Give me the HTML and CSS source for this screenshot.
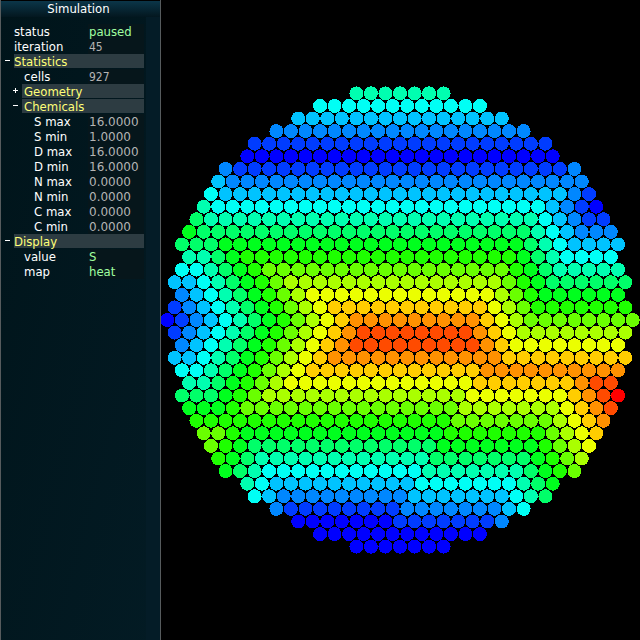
FILE: index.html
```
<!DOCTYPE html>
<html lang="en">
<head>
<meta charset="utf-8">
<title>Simulation</title>
<link rel="stylesheet" href="styles.css">
</head>
<body>
<div class="app">
  <aside class="panel">
    <h1 class="title">Simulation</h1>
    <div class="content">
      <dl class="rows">
        <div class="row"><dt>status</dt><dd class="option">paused</dd></div>
        <div class="row"><dt>iteration</dt><dd>45</dd></div>
      </dl>
      <button class="group" type="button" aria-expanded="true"><span class="sign minus"></span><span class="name">Statistics</span></button>
      <dl class="rows level1">
        <div class="row"><dt>cells</dt><dd>927</dd></div>
      </dl>
      <button class="group level1" type="button" aria-expanded="false"><span class="sign plus"></span><span class="name">Geometry</span></button>
      <button class="group level1" type="button" aria-expanded="true"><span class="sign minus"></span><span class="name">Chemicals</span></button>
      <dl class="rows level2">
        <div class="row"><dt>S max</dt><dd class="decimal">16.0000</dd></div>
        <div class="row"><dt>S min</dt><dd class="decimal">1.0000</dd></div>
        <div class="row"><dt>D max</dt><dd class="decimal">16.0000</dd></div>
        <div class="row"><dt>D min</dt><dd class="decimal">16.0000</dd></div>
        <div class="row"><dt>N max</dt><dd class="decimal">0.0000</dd></div>
        <div class="row"><dt>N min</dt><dd class="decimal">0.0000</dd></div>
        <div class="row"><dt>C max</dt><dd class="decimal">0.0000</dd></div>
        <div class="row"><dt>C min</dt><dd class="decimal">0.0000</dd></div>
      </dl>
      <button class="group" type="button" aria-expanded="true"><span class="sign minus"></span><span class="name">Display</span></button>
      <dl class="rows level1">
        <div class="row"><dt>value</dt><dd class="option">S</dd></div>
        <div class="row"><dt>map</dt><dd class="option">heat</dd></div>
      </dl>
    </div>
  </aside>
  <main class="stage">
    <svg id="cells" class="cells" viewBox="-240 -320 480 640" role="img" aria-label="Cell heat map"></svg>
  </main>
</div>
<script src="cells.js"></script>
</body>
</html>
```
FILE: styles.css
```
* {
  box-sizing: border-box;
}

body {
  margin: 0;
  background: #000;
  font: 13px/15px "DejaVu Sans Condensed", "DejaVu Sans", sans-serif;
  color: #fff;
}

.app {
  display: flex;
  min-height: 100vh;
}

.panel {
  flex: none;
  width: 161px;
  margin-right: -1px;
  z-index: 1;
  border: solid #565b5d;
  border-width: 0 1px;
  background: linear-gradient(105deg, #00141a, #031b24);
}

.title {
  margin: 0;
  height: 17px;
  font-size: 13px;
  font-weight: normal;
  line-height: 15px;
  text-align: center;
  padding-right: 4px;
  border-top: 1px solid #000;
  background: linear-gradient(#0b3649, #03171f);
}

.content {
  display: flex;
  flex-direction: column;
  min-height: calc(100vh - 17px);
  margin-right: 14px;
  padding: 7px 2px 0 0;
  box-shadow: 14px 0 #041c27;
}

.rows {
  margin: 0;
  padding-left: 13px;
}

.rows.level1 {
  padding-left: 23px;
}

.rows.level2 {
  padding-left: 33px;
}

.row {
  display: flex;
  justify-content: space-between;
  height: 15px;
}

dd {
  width: 56px;
  margin: 0;
  padding-left: 1px;
  background: #06161b;
  color: #b4b4b4;
  font-size: 12px;
  line-height: 16px;
}

.decimal {
  font-family: "DejaVu Sans", sans-serif;
}

dd.option {
  color: #a0ffa0;
  font-size: 13px;
  line-height: 15px;
}

.group {
  display: flex;
  height: 15px;
  margin: 0;
  padding: 0 0 1px 3px;
  border: 0;
  background: none;
  color: #ffff78;
  font: inherit;
  text-align: left;
}

.group.level1 {
  padding-left: 11px;
}

.sign {
  flex: none;
  width: 10px;
  height: 14px;
  background: linear-gradient(#fff, #fff) 1px 6px / 5px 1px no-repeat;
}

.plus {
  background:
    linear-gradient(#fff, #fff) 1px 6px / 5px 1px no-repeat,
    linear-gradient(#fff, #fff) 3px 4px / 1px 5px no-repeat;
}

.name {
  flex: 1;
  height: 14px;
  background: #2d3c42;
}

.level1 .name {
  padding-left: 2px;
}

.stage {
  flex: 1;
  min-width: 0;
  display: flex;
}

.cells {
  width: 100%;
  height: 100vh;
  shape-rendering: crispEdges;
}
```
FILE: cells.js
```
// Heat palette, coldest (a) to hottest (p).
const palette = {
  a: "#0000ff", b: "#003cff", c: "#0087ff", d: "#00c3ff",
  e: "#00fff5", f: "#00ffb0", g: "#00ff69", h: "#00ff1e",
  i: "#1eff00", j: "#69ff00", k: "#aaff00", l: "#ebff00",
  m: "#ffcd00", n: "#ff9100", o: "#ff4b00", p: "#ff0000"
};

// One entry per lattice row: a level, then how many cells in a row share it.
const rows = [
  "f7", "e12", "d15", "c18", "b21", "a22", "c b23 c", "d c25",
  "e d24 c b", "f e23 d c b a", "g f23 e d c b2", "h g23 f e d c3",
  "g3 h21 g f e d4", "f2 g h i19 h g f e4", "e2 f g h i j17 i h g f5",
  "d2 e f g h i j k15 j i h g6", "c d e f g h i j k l13 k j i h6",
  "b c d e f g h i j k l m11 l k j i7",
  "a b c d e f g h i j k l m n9 m l k j8",
  "b c d e f g h i j k l m n o8 n m l k8",
  "c d e f g h i j k l m n o9 n m l8",
  "d2 e f g h i j k l m n12 m9", "e2 f g h i j k l m12 n10",
  "f2 g h i j k l13 m7 n o2", "g3 h i j k14 l7 m n o p",
  "h3 i j15 k7 l m n o", "i18 j7 k l m n", "j2 i h14 i7 j k l m",
  "j i h g13 h7 i j k l", "i h g f12 g7 h i j k", "h g f e11 f7 g h i j",
  "f e d10 e7 f g h", "e d c9 d7 e f g", "c b8 c7 d e", "a7 b7 c",
  "a12", "a7"
];

const pitchX = 14.54;
const pitchY = pitchX * Math.sqrt(3) / 2;
const svg = document.getElementById("cells");

rows.forEach((row, r) => {
  const levels = row.split(" ").flatMap(run => Array(Number(run.slice(1)) || 1).fill(run[0]));
  levels.forEach((level, i) => {
    const circle = document.createElementNS("http://www.w3.org/2000/svg", "circle");
    circle.setAttribute("cx", (i - (levels.length - 1) / 2) * pitchX);
    circle.setAttribute("cy", (r - (rows.length - 1) / 2) * pitchY);
    circle.setAttribute("r", 7);
    circle.setAttribute("fill", palette[level]);
    svg.append(circle);
  });
});
```
